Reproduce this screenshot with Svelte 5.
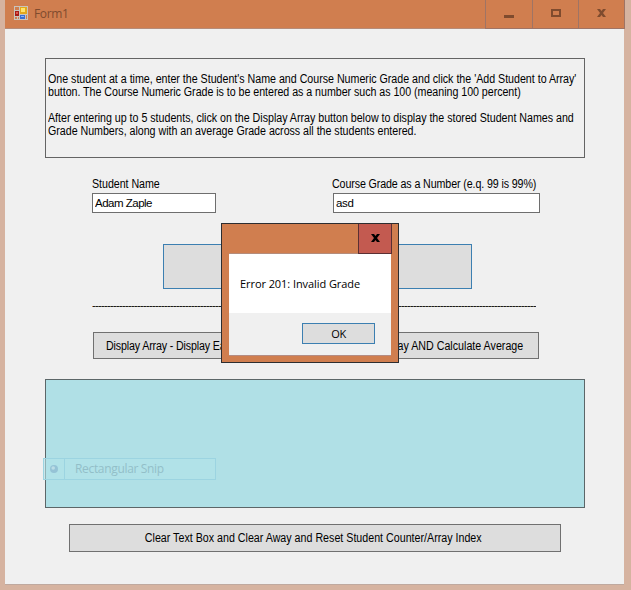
<script>
  const help = [
    "One student at a time, enter the Student's Name and Course Numeric Grade and click the 'Add Student to Array'",
    'button. The Course Numeric Grade is to be entered as a number such as 100 (meaning 100 percent)',
    '',
    'After entering up to 5 students, click on the Display Array button below to display the stored Student Names and',
    'Grade Numbers, along with an average Grade across all the students entered.'
  ];
  const rule = '-'.repeat(148);
  let name = $state('Adam Zaple');
  let grade = $state('asd');
</script>

<div class="window">
  <header>
    <svg class="logo" width="14" height="14" viewBox="0 0 14 14" shape-rendering="crispEdges">
      <path fill="#c9c4bd" d="M0 0h14v14H0z" />
      <path fill="#d07e4f" d="M1 1h4v3H1zM1 11h2v2H1zM4 11h1v2H4zM12 9h1v4h-1z" />
      <path fill="#a51c18" d="M1 5h4v5H1z" />
      <path fill="#e0584a" d="M2 6h2v2H2z" />
      <path fill="#e2a81c" d="M6 1h7v7H6z" />
      <path fill="#ffe36b" d="M7 2h4v4H7z" />
      <path fill="#3a6fd0" d="M6 9h5v4H6z" />
      <path fill="#86b5fb" d="M7 10h3v1H7z" />
    </svg>
    <span class="title">Form1</span>
    <div class="controls">
      <button aria-label="Minimize"><svg width="10" height="9" viewBox="0 0 10 9"><path fill="#7f4b2e" d="M0 6h10v3H0z" /></svg></button>
      <button aria-label="Maximize"><svg width="10" height="8" viewBox="0 0 10 8"><path fill="none" stroke="#7f4b2e" stroke-width="2" d="M1 1h8v6H1z" /></svg></button>
      <button aria-label="Close"><svg width="9" height="8" viewBox="0 0 9 8"><path fill="#7f4b2e" d="M0 0h3l1.500 2L6 0h3L6 4l3 4H6L4.500 6L3 8H0l3-4z" /></svg></button>
    </div>
  </header>

  <main>
    <div class="help">
      {#each help as line, i}<div class="line l{i}">{line}</div>{/each}
    </div>
    <div class="fields">
      <label class="student"><span>Student Name</span><input bind:value={name} /></label>
      <label class="grade"><span>Course Grade as a Number (e.q. 99 is 99%)</span><input bind:value={grade} /></label>
    </div>
    <button class="add" aria-label="Add Student to Array"></button>
    <div class="rule">{rule}</div>
    <div class="actions">
      <button class="show"><span>Display Array - Display Each</span></button>
      <button class="average"><span>Display Array AND Calculate Average</span></button>
    </div>
    <div class="output"></div>
    <button class="clear"><span>Clear Text Box and Clear Away and Reset Student Counter/Array Index</span></button>
  </main>

  <div class="snip">
    <div class="dot"><svg width="8" height="8" viewBox="0 0 8 8"><circle cx="4" cy="4" r="4" fill="#95c3d6" /><circle cx="3.2" cy="3" r="1.8" fill="#bcdde6" /></svg></div>
    <span>Rectangular Snip</span>
  </div>

  <div class="dialog">
    <div class="bar">
      <button aria-label="Close"><svg width="9" height="8" viewBox="0 0 9 8"><path fill="#000" d="M0 0h3l1.500 2L6 0h3L6 4l3 4H6L4.500 6L3 8H0l3-4z" /></svg></button>
    </div>
    <div class="body">
      <div class="message"><span>Error 201: Invalid Grade</span></div>
      <div class="foot"><button>OK</button></div>
    </div>
  </div>
</div>

<style>
  :global(body) { margin: 0; }
  .window, .window * { box-sizing: border-box; }
  .window {
    position: relative;
    width: 631px;
    height: 590px;
    padding: 0 7px 5px 5px;
    background: #d6b3a0;
    font: 12px/13px 'Liberation Sans', Arial, sans-serif;
    color: #000;
    display: flex;
    flex-direction: column;
    overflow: hidden;
  }
  button, input { font: inherit; color: inherit; margin: 0; padding: 0; border-radius: 0; outline: none; }
  button { display: flex; align-items: center; justify-content: center; white-space: nowrap; }
  header {
    height: 29px;
    flex: none;
    display: flex;
    background: #d07e4f;
    border-bottom: 1px solid #b68c79;
    padding-left: 9px;
  }
  .logo { margin-top: 6px; }
  .title { margin: 6px 0 0 6px; font: 12px/16px 'Open Sans', 'Noto Sans', sans-serif; letter-spacing: -.35px; color: #7f4b2e; }
  .controls { margin-left: auto; display: flex; height: 29px; margin-right: -1px; }
  .controls button { width: 47px; border: solid #9f7465; border-width: 0 0 1px 1px; background: none; padding-bottom: 2px; }
  .controls button:nth-child(2) { width: 46px; }
  .controls button:last-child { width: 47px; border-right-width: 1px; }
  main { flex: 1; background: #f0f0f0; border-bottom: 1px solid #bfa99f; padding: 29px 39px 0 40px; display: flex; flex-direction: column; }
  .help { height: 100px; border: 1px solid #646464; padding: 14px 0 0 2px; }
  .line, label span, main button span { white-space: nowrap; transform: scaleX(.89); transform-origin: left; }
  .line { width: max-content; height: 13px; letter-spacing: -.02px; }
  .l1 { letter-spacing: -.045px; }
  .l4 { letter-spacing: -.03px; }
  .fields { display: flex; margin: 20px 0 0 47px; }
  label { display: flex; flex-direction: column; }
  label span { height: 15px; }
  input { height: 20px; border: 1px solid #6e6e6e; background: #fff; padding: 0 2px; font-size: 11.5px; letter-spacing: -.5px; }
  .student { width: 124px; }
  .student span { letter-spacing: -.05px; }
  .grade { width: 207px; margin-left: 117px; }
  .grade span { width: max-content; margin-left: -1px; letter-spacing: -.13px; }
  .grade input { letter-spacing: -.3px; }
  .add { width: 309px; height: 45px; margin: 31px 0 0 118px; background: #ddd; border: 1px solid #3c7fb1; }
  .rule { margin: 10px 0 0 47px; width: 444px; height: 13px; overflow: hidden; white-space: nowrap; font-size: 11px; letter-spacing: -.663px; }
  .actions { display: flex; justify-content: space-between; margin: 20px 46px 0 48px; }
  .actions button, .clear { height: 27px; background: #ddd; border: 1px solid #707070; }
  .actions button { padding-top: 2px; }
  .show { width: 200px; justify-content: flex-start; padding-left: 12px; }
  .show span { letter-spacing: -.17px; }
  .average { width: 230px; justify-content: flex-end; padding-right: 15px; }
  .actions .average span { transform-origin: right; }
  .output { height: 129px; margin-top: 20px; background: #b0e0e6; border: 1px solid #5c6668; }
  .clear { width: 492px; height: 28px; margin: 16px 0 0 24px; }
  main .clear span { transform-origin: center; margin-left: -3px; }
  .snip { position: absolute; left: 43px; top: 458px; width: 173px; height: 22px; border: 1px solid #9cd4e1; background: rgba(178, 226, 234, .6); display: flex; align-items: center; font: 12px/20px 'Open Sans', 'Noto Sans', sans-serif; color: #93bfc8; }
  .dot { width: 21px; height: 20px; border-right: 1px solid #9cd4e1; display: flex; align-items: center; justify-content: center; }
  .snip span { margin-left: 10px; letter-spacing: -.33px; }
  .dialog { position: absolute; left: 221px; top: 223px; width: 178px; height: 140px; border: 1px solid #2d2d30; background: #d07e4f; padding: 0 7px 7px; font: 11px/14px 'Open Sans', 'Noto Sans', sans-serif; }
  .bar { height: 30px; display: flex; justify-content: flex-end; border-bottom: 1px solid #b48c7b; }
  .bar button { width: 34px; height: 30px; margin-right: -1px; padding-bottom: 1px; background: #c35a50; border: solid #5b2f33; border-width: 0 1px 1px; }
  .body { height: 102px; background: #f0f0f0; border-bottom: 1px solid #b48c83; }
  .message { height: 59px; background: #fff; padding: 23px 0 0 11px; white-space: nowrap; letter-spacing: -.07px; }
  .foot { display: flex; justify-content: flex-end; padding: 10px 16px 0 0; }
  .foot button { width: 73px; height: 21px; border: 1px solid #3c7fb1; background: #ddd; letter-spacing: -.4px; }
</style>
